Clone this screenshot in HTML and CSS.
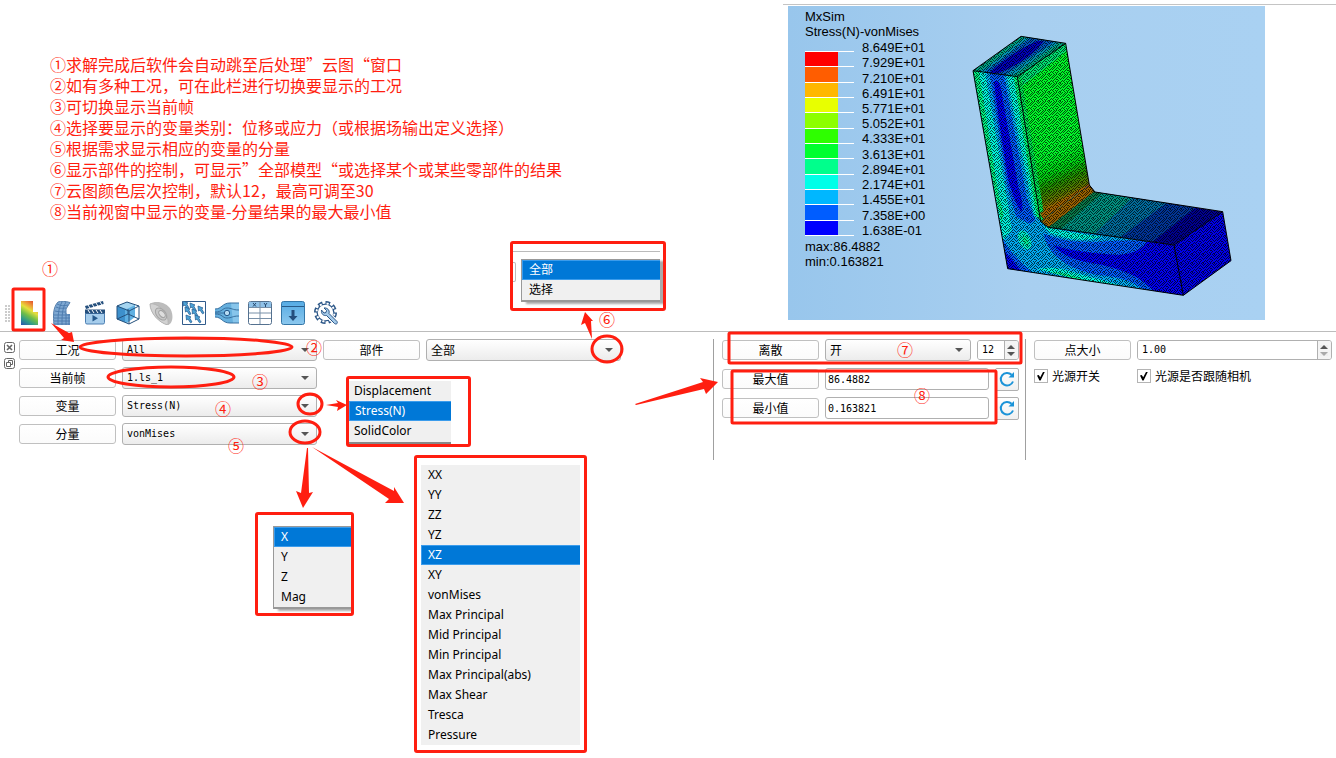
FILE: index.html
```html
<!DOCTYPE html>
<html lang="zh-CN">
<head>
<meta charset="utf-8">
<title>MxSim 云图</title>
<link rel="stylesheet" href="styles.css">
</head>
<body>
<main class="page">
  <section class="top">
    <div class="intro">
      <div class="notes">
        <p>①求解完成后软件会自动跳至后处理”云图“窗口</p>
        <p>②如有多种工况，可在此栏进行切换要显示的工况</p>
        <p>③可切换显示当前帧</p>
        <p>④选择要显示的变量类别：位移或应力（或根据场输出定义选择）</p>
        <p>⑤根据需求显示相应的变量的分量</p>
        <p>⑥显示部件的控制，可显示”全部模型“或选择某个或某些零部件的结果</p>
        <p>⑦云图颜色层次控制，默认12，最高可调至30</p>
        <p>⑧当前视窗中显示的变量-分量结果的最大最小值</p>
      </div>
      <div class="toolbar">
        <span class="grip"></span>
        <button class="tool" type="button" aria-label="云图">
          <svg viewBox="0 0 24 24"><defs><linearGradient id="cloud" gradientUnits="userSpaceOnUse" x1="17" y1="0" x2="3" y2="23"><stop offset="0" stop-color="#e0452c"/><stop offset="0.2" stop-color="#ee9a38"/><stop offset="0.36" stop-color="#e6e03c"/><stop offset="0.58" stop-color="#6fbe48"/><stop offset="0.78" stop-color="#2f9a8a"/><stop offset="1" stop-color="#2b56b0"/></linearGradient></defs><path d="M4 0h12v11h5v13H4z" fill="url(#cloud)"/></svg>
        </button>
        <button class="tool" type="button" aria-label="网格">
          <svg viewBox="0 0 24 24"><path d="M8 1C11 0 15 0 20 1.500L16 8v5h4v11H4C3 15 3 6 8 1z" fill="#7ea8d2"/><path d="M7 3c4 2 7 2 11 1M6 6c4 2 7 1 10 1M5 10c4 1 8 1 11 1M4 14h16M4 17h16M4 20h16M4 23h16M12 1C8 8 8 15 8 24M16 1c-4 7-4 14-4 23M16 12v12M19 13v11" fill="none" stroke="#4a78ab" stroke-width=".9"/><path d="M8 1C3 6 3 15 4 24M8 1C11 0 15 0 20 1.500L16 8v5" fill="none" stroke="#5680ad"/></svg>
        </button>
        <button class="tool" type="button" aria-label="动画">
          <svg viewBox="0 0 24 24"><path d="M2.500 12.500h19v9q0 1.500-1.500 1.500H4q-1.500 0-1.500-1.500z" fill="#a6cdec" stroke="#4c7fb2"/><path d="M2 8.500h20v4H2z" fill="#244f7d"/><path d="M5 9l2 3M9 9l2 3M13 9l2 3M17 9l2 3" stroke="#fff"/><path d="M2 5L20 0l.7 3L3 8z" fill="#244f7d"/><path d="M5 4l2 3M9 3l2 3M13 2l2 3M17 1l2 3" stroke="#fff"/><path d="M9.500 14v6.500l5.500-3.200z" fill="#24588c"/></svg>
        </button>
        <button class="tool" type="button" aria-label="实体">
          <svg viewBox="0 0 24 24"><path d="M1 5l10-4 8 3v12l-8 6L1 18z" fill="#5fb0e2"/><path d="M1 5l8 4v12l-8-3z" fill="#3d90cc"/><path d="M1 5l10-4 8 3-8 4z" fill="#a5d5f0"/><path d="M1 5l10-4 12 4-10 5zM1 5v13l12 5 10-5V5M13 10v13M1 18l11-5 11 5M12 8v5" fill="none" stroke="#24507c"/></svg>
        </button>
        <button class="tool" type="button" aria-label="剖切">
          <svg viewBox="0 0 24 24"><path d="M1 3C6-1 18 1 22 9c3 7 1 14-3 15C10 22 1 12 1 3z" fill="#bcbcbc"/><path d="M1 3c6-2 20 8 18 21C10 22 1 12 1 3z" fill="#d2d2d2" stroke="#b4b4b4"/><ellipse cx="12" cy="13" rx="7" ry="4.500" transform="rotate(50 12 13)" fill="#c8c8c8" stroke="#a4a4a4"/><ellipse cx="13" cy="13" rx="4" ry="2.500" transform="rotate(50 13 13)" fill="#dedede" stroke="#a4a4a4"/></svg>
        </button>
        <button class="tool" type="button" aria-label="矢量">
          <svg viewBox="0 0 24 24"><path d="M.5.500h23v23H.5z" fill="#fff" stroke="#315b8b"/><g fill="#4ba4d8" stroke="#2b6296" stroke-width=".8"><path id="vec" d="M1 0l5 2-1.400.8L7 7l-1.500.8L3 4 1.500 5z"/><use href="#vec" x="7" y="2"/><use href="#vec" x="15" y="5"/><use href="#vec" x="2" y="6"/><use href="#vec" x="9" y="8"/><use href="#vec" x="3" y="14"/><use href="#vec" x="12" y="14"/></g></svg>
        </button>
        <button class="tool" type="button" aria-label="流线">
          <svg viewBox="0 0 24 24"><path d="M0 8c7 0 7-6 15-6h9v20h-9C7 22 7 16 0 16z" fill="#66b0de"/><path d="M16 2h8v20h-6z" fill="#87c5eb"/><path d="M0 8c7 0 7-6 15-6h9M0 16c7 0 7 6 15 6h9M0 12h9M0 11c8 0 7-4 12-4s5 2 12 2M0 13c8 0 7 4 12 4s5-2 12-2" fill="none" stroke="#376f9f"/><circle cx="12" cy="12" r="2.700" fill="#b7dcf3" stroke="#24588c"/></svg>
        </button>
        <button class="tool" type="button" aria-label="表格">
          <svg viewBox="0 0 24 24"><rect x=".5" y=".5" width="23" height="23" rx="2" fill="#fff" stroke="#54718f"/><path d="M1 1h22v5H1z" fill="#8fc1e8"/><path d="M1 6.500h22M1 12h22M1 17.500h22M12 1v22" stroke="#7890a8" fill="none"/><path d="M5 2l3 3.500M8 2L5 5.500M16 2l1.500 2L19 2M17.500 4v2" stroke="#27496e" fill="none"/></svg>
        </button>
        <button class="tool" type="button" aria-label="导出">
          <svg viewBox="0 0 24 24"><defs><linearGradient id="save" x2="0" y2="1"><stop offset="0" stop-color="#55abe4"/><stop offset="1" stop-color="#8cc8ee"/></linearGradient></defs><rect x=".5" y=".5" width="23" height="23" rx="2" fill="url(#save)" stroke="#3477a8"/><path d="M1 5.500h22" stroke="#285b89"/><path d="M10.500 9h3v6h3l-4.500 5-4.500-5h3z" fill="#244f7d"/></svg>
        </button>
        <button class="tool" type="button" aria-label="设置">
          <svg viewBox="0 0 24 24"><circle cx="11.500" cy="11.500" r="9.500" fill="none" stroke="#2b5687" stroke-width="4" pathLength="80" stroke-dasharray="6 4"/><circle cx="11.500" cy="11.500" r="9" fill="#2b5687"/><circle cx="11.500" cy="11.500" r="9" fill="none" stroke="#fff" stroke-width="2" pathLength="80" stroke-dasharray="3 7" stroke-dashoffset="-1.500"/><circle cx="11.500" cy="11.500" r="7.700" fill="#fff"/><path d="M7.500 9c-.5 4 2 6 5 5.500l8 8c2 1.500 3.500-.5 2.500-2L15 12.500C16 9 13 6.500 10 7l2.500 2.500-.5 2-2 .5z" fill="#a5cbea" stroke="#fff" stroke-width="3"/><path d="M7.500 9c-.5 4 2 6 5 5.500l8 8c2 1.500 3.500-.5 2.500-2L15 12.500C16 9 13 6.500 10 7l2.500 2.500-.5 2-2 .5z" fill="#a5cbea" stroke="#2b5687"/></svg>
        </button>
      </div>
    </div>
    <div class="stage">
      <div class="viewer">
        <div class="legend">
          <p>MxSim</p>
          <p>Stress(N)-vonMises</p>
          <div class="scale">
            <div class="swatches">
              <span class="sw c1"></span><span class="sw c2"></span><span class="sw c3"></span><span class="sw c4"></span><span class="sw c5"></span><span class="sw c6"></span><span class="sw c7"></span><span class="sw c8"></span><span class="sw c9"></span><span class="sw c10"></span><span class="sw c11"></span><span class="sw c12"></span>
            </div>
            <div class="values">
              <span>8.649E+01</span><span>7.929E+01</span><span>7.210E+01</span><span>6.491E+01</span><span>5.771E+01</span><span>5.052E+01</span><span>4.333E+01</span><span>3.613E+01</span><span>2.894E+01</span><span>2.174E+01</span><span>1.455E+01</span><span>7.358E+00</span><span>1.638E-01</span>
            </div>
          </div>
          <p>max:86.4882</p>
          <p>min:0.163821</p>
        </div>
        <svg class="model" viewBox="0 0 900 870">
          <defs>
            <pattern id="mesh" width="33" height="27" patternUnits="userSpaceOnUse">
              <path d="M0 0h3v3H0zM6 0h3v3H6zM15 0h3v3h-3zM21 0h3v3h-3zM27 0h3v3h-3zM3 3h3v3H3zM12 3h3v3h-3zM18 3h3v3h-3zM30 3h3v3h-3zM0 6h3v3H0zM9 6h3v3H9zM15 6h3v3h-3zM24 6h3v3h-3zM6 9h3v3H6zM12 9h3v3h-3zM21 9h3v3h-3zM27 9h3v3h-3zM3 12h3v3H3zM9 12h3v3H9zM18 12h3v3h-3zM30 12h3v3h-3zM0 15h3v3H0zM15 15h3v3h-3zM21 15h3v3h-3zM24 15h3v3h-3zM6 18h3v3H6zM12 18h3v3h-3zM27 18h3v3h-3zM3 21h3v3H3zM9 21h3v3H9zM18 21h3v3h-3zM24 21h3v3h-3zM0 24h3v3H0zM12 24h3v3h-3zM21 24h3v3h-3zM30 24h3v3h-3z"/>
            </pattern>
            <clipPath id="front"><path d="M69 152L202 170 272 605 295 622 672 675 700 826 173 746z"/></clipPath>
            <clipPath id="cap"><path d="M69 152L213 49 347 70 202 170z"/></clipPath>
            <clipPath id="back"><path d="M202 170L347 70 418 495 435 516 295 622 272 605z"/></clipPath>
            <clipPath id="seat"><path d="M272 605L418 495 435 516 818 575 672 675 295 622z"/></clipPath>
            <linearGradient id="heat" gradientUnits="userSpaceOnUse" x1="296" y1="405" x2="362" y2="550">
              <stop offset="0" stop-color="#00f828"/><stop offset=".35" stop-color="#00d010"/><stop offset=".55" stop-color="#209000"/><stop offset=".78" stop-color="#5c7400"/><stop offset=".92" stop-color="#a06800"/><stop offset="1" stop-color="#b84000"/>
            </linearGradient>
          </defs>
          <g clip-path="url(#cap)">
            <path d="M60 40h300v140H60z" fill="#00a080"/>
            <path d="M85 158L230 50 330 65 182 170z" fill="#0090b0"/>
            <path d="M100 158L245 50 312 66 160 168z" fill="#0055b8"/>
            <path d="M118 158Q180 100 262 62L282 64Q240 120 145 160z" fill="#0000b8"/>
          </g>
          <g clip-path="url(#back)">
            <path d="M190 60h260v570H190z" fill="url(#heat)"/>
            <path d="M202 170L347 70 350 92 208 205z" fill="#00e070"/>
            <path d="M202 170L215 175 285 600 270 605z" fill="#00e050"/>
            <path d="M270 580L420 490 436 520 296 624z" fill="#a06000"/>
            <path d="M310 580L395 528 405 535 320 585z" fill="#d82800"/>
          </g>
          <g clip-path="url(#seat)">
            <path d="M260 490h570v200H260z" fill="#000090"/>
            <path d="M270 480L740 560 590 680 270 640z" fill="#003498"/>
            <path d="M270 480L650 548 500 660 270 640z" fill="#006a9c"/>
            <path d="M270 480L545 535 425 650 270 640z" fill="#009080"/>
            <path d="M270 480L455 520 330 630 270 640z" fill="#087848"/>
            <path d="M270 600L420 495 432 515 295 622z" fill="#986000"/>
          </g>
          <g clip-path="url(#front)">
            <path d="M60 140h650v700H60z" fill="#00a8f0"/>
            <path d="M60 150H104L175 560 185 630 160 660z" fill="#00f0d8"/>
            <path d="M60 150H86L145 520 160 580 155 610z" fill="#00f080"/>
            <path d="M170 165L205 170 278 605 252 585z" fill="#00f0d8"/>
            <path d="M190 165L205 170 278 605 260 590z" fill="#00f070"/>
            <path d="M118 155H160L232 540 256 600 240 612 198 590 172 500z" fill="#0058f8"/>
            <path d="M132 185Q142 175 152 200L205 500Q224 560 214 575 198 560 175 480 145 300 132 185z" fill="#0000f0"/>
            <path d="M280 618Q360 640 460 650 380 672 300 640z" fill="#00f0d8"/>
            <path d="M280 640Q350 675 480 662L600 660 720 690V840H610Q560 770 440 765 300 735 280 640z" fill="#0058f8"/>
            <path d="M310 675Q360 695 500 705 570 700 590 665L700 670V840L612 815Q560 750 420 728 340 715 310 675z" fill="#0000f0"/>
            <path d="M262 748Q310 735 380 760L510 795 490 805z" fill="#00f0d8"/>
            <path d="M300 757Q350 755 410 784z" fill="#00f080"/>
            <ellipse cx="224" cy="660" rx="18" ry="30" transform="rotate(-25 224 660)" fill="#00e8c8"/>
            <ellipse cx="227" cy="662" rx="7" ry="14" transform="rotate(-25 227 662)" fill="#00e890"/>
            <path d="M155 650Q180 700 250 760L160 750z" fill="#0058f8"/>
            <path d="M160 690Q190 720 215 755L160 750z" fill="#0000f0"/>
          </g>
          <path d="M672 675L818 575 843 722 700 826z" fill="#0000e8"/>
          <path d="M69 152L213 49 347 70 418 495 435 516 818 575 843 722 700 826 173 746z" fill="url(#mesh)" opacity=".68" shape-rendering="crispEdges"/>
          <path d="M69 152L213 49 347 70 418 495 435 516 818 575 843 722 700 826 173 746zM69 152L202 170 347 70M202 170L272 605 295 622 672 675 818 575M672 675L700 826" fill="none" stroke="#000" stroke-width="3"/>
        </svg>
      </div>
    </div>
  </section>

  <section class="panel">
    <div class="group group-a">
      <div class="dock">
        <button type="button" class="dock-btn" aria-label="关闭"><svg viewBox="0 0 11 11"><rect x=".5" y=".5" width="10" height="10" rx="2"/><path d="M3 3l5 5M8 3L3 8" stroke-width="1.600"/></svg></button>
        <button type="button" class="dock-btn" aria-label="浮动"><svg viewBox="0 0 11 11"><rect x=".5" y=".5" width="10" height="10" rx="2"/><path d="M4.500 4V2.500h4v4H7M2.500 4.500h4v4h-4z"/></svg></button>
      </div>
      <div class="fields">
        <label class="cap" for="case">工况</label>
        <div class="combo"><select id="case"><option>All</option></select></div>
        <label class="cap" for="part">部件</label>
        <div class="combo"><select id="part" class="cn"><option>全部</option><option>选择</option></select></div>
        <label class="cap start" for="frame">当前帧</label>
        <div class="combo"><select id="frame"><option>1.ls_1</option></select></div>
        <label class="cap start" for="variable">变量</label>
        <div class="combo"><select id="variable"><option>Stress(N)</option></select></div>
        <label class="cap start" for="component">分量</label>
        <div class="combo"><select id="component"><option>vonMises</option></select></div>
      </div>
    </div>
    <div class="group group-b">
      <div class="row">
        <label class="cap" for="discrete">离散</label>
        <div class="combo grow"><select id="discrete" class="cn"><option>开</option></select></div>
        <div class="spin small"><input id="levels" type="text" value="12" aria-label="层次"><span class="steps"><button type="button" class="up" aria-label="增加"></button><button type="button" class="down" aria-label="减少"></button></span></div>
      </div>
      <div class="row">
        <label class="cap" for="max">最大值</label>
        <input class="text grow" id="max" type="text" value="86.4882">
        <button type="button" class="refresh" aria-label="刷新最大值"><svg viewBox="0 0 18 18"><path d="M15 11.500A6.300 6.300 0 1 1 13.600 4.800" /><path class="tip" d="M16 2v5.500h-5.500z"/></svg></button>
      </div>
      <div class="row">
        <label class="cap" for="min">最小值</label>
        <input class="text grow" id="min" type="text" value="0.163821">
        <button type="button" class="refresh" aria-label="刷新最小值"><svg viewBox="0 0 18 18"><path d="M15 11.500A6.300 6.300 0 1 1 13.600 4.800" /><path class="tip" d="M16 2v5.500h-5.500z"/></svg></button>
      </div>
    </div>
    <div class="group group-c">
      <div class="row">
        <label class="cap" for="point">点大小</label>
        <div class="spin grow"><input id="point" type="text" value="1.00"><span class="steps"><button type="button" class="up" aria-label="增大"></button><button type="button" class="down off" aria-label="减小"></button></span></div>
      </div>
      <div class="row checks">
        <label class="check"><input type="checkbox" checked>光源开关</label>
        <label class="check"><input type="checkbox" checked>光源是否跟随相机</label>
      </div>
    </div>
  </section>

  <div class="callout call-part">
    <ul class="menu framed"><li class="on">全部</li><li>选择</li></ul>
  </div>
  <div class="callout call-variable">
    <ul class="menu"><li>Displacement</li><li class="on">Stress(N)</li><li>SolidColor</li></ul>
  </div>
  <div class="callout call-axis">
    <ul class="menu framed"><li class="on">X</li><li>Y</li><li>Z</li><li>Mag</li></ul>
  </div>
  <div class="callout call-component">
    <ul class="menu"><li>XX</li><li>YY</li><li>ZZ</li><li>YZ</li><li class="on">XZ</li><li>XY</li><li>vonMises</li><li>Max Principal</li><li>Mid Principal</li><li>Min Principal</li><li>Max Principal(abs)</li><li>Max Shear</li><li>Tresca</li><li>Pressure</li></ul>
  </div>

  <svg class="marks" viewBox="0 0 1336 758" width="1336" height="758">
    <g class="outline">
      <rect x="13" y="289" width="31" height="41" rx="1"/>
      <rect x="729" y="333" width="292" height="30" rx="1"/>
      <rect x="732" y="371" width="264" height="52" rx="1"/>
      <ellipse cx="186" cy="347" rx="106" ry="9"/>
      <ellipse cx="171" cy="377" rx="63" ry="10"/>
      <ellipse cx="310" cy="404" rx="12" ry="10"/>
      <ellipse cx="305" cy="432" rx="15" ry="11"/>
      <ellipse cx="607" cy="349" rx="15" ry="13"/>
    </g>
    <g class="arrow">
      <path d="M51 323L69 333 72 332 74 342 61 340 64 338z"/>
      <path d="M326 405L338 403 336 400 347 405 337 411 338 407z"/>
      <path d="M592 339L591 321 593 321 585 312 581 325 585 323z"/>
      <path d="M635 404L703 382 700 378 718 382 706 394 704 389 636 405z"/>
      <path d="M308 448L309 493 313 492 303 508 296 491 301 493 307 448z"/>
      <path d="M312 447L394 491 394 487 404 503 385 503 389 499z"/>
    </g>
    <g class="digits">
      <text x="50" y="275">①</text>
      <text x="314" y="354">②</text>
      <text x="260" y="388">③</text>
      <text x="223" y="415">④</text>
      <text x="236" y="452">⑤</text>
      <text x="607" y="326">⑥</text>
      <text x="905" y="356">⑦</text>
      <text x="922" y="402">⑧</text>
    </g>
  </svg>
</main>
</body>
</html>
```
FILE: styles.css
```css
* { box-sizing: border-box; }
body {
  margin: 0;
  background: #fff;
  color: #000;
  font: 12px/20px "Noto Sans", "Noto Sans CJK SC", sans-serif;
}
p, ul { margin: 0; padding: 0; list-style: none; }
button, input, select { font: inherit; color: inherit; margin: 0; padding: 0; }

.page { position: relative; min-height: 100vh; overflow: hidden; }

/* notes, toolbar and result view */
.top { display: grid; grid-template-columns: 783fr 553fr; }
.intro {
  display: flex;
  flex-direction: column;
  justify-content: space-between;
  padding: 54px 0 6px;
}
.notes {
  padding-left: 50px;
  color: #ff1e10;
  font: 16px/21px "Noto Sans CJK SC", sans-serif;
}
.toolbar { display: flex; align-items: center; gap: 9px; padding-left: 5px; }
.grip {
  width: 5px;
  height: 17px;
  margin-right: -2px;
  background: radial-gradient(circle at 1px 1px, #ccc 1px, transparent 1px) 0 0 / 3px 3px;
}
.tool { width: 24px; height: 24px; border: 0; background: none; }
.tool svg { display: block; width: 24px; height: 24px; }

.stage { margin-top: 4px; padding: 1px 71px 11px 5px; border-top: 1px solid #c4c4c4; }
.viewer {
  display: flex;
  align-items: flex-start;
  height: 314px;
  background: linear-gradient(90deg, #98c6ec, #a8cff0 50%, #a9d1f2);
}
.legend {
  width: 162px;
  padding: 3px 0 0 17px;
  font: 13px/15px "Liberation Sans", Arial, sans-serif;
  white-space: nowrap;
}
.scale { display: flex; gap: 8px; padding: 1px 0; }
.swatches { display: grid; width: 49px; height: 185px; margin-top: 11px; border-bottom: 1px solid #fff; }
.sw { border-top: 1px solid #fff; background: linear-gradient(currentColor, currentColor) 0 0 / 33px 100% no-repeat; }
.c1 { color: #f00; }
.c2 { color: #ff5d00; }
.c3 { color: #ffb700; }
.c4 { color: #e8ff00; }
.c5 { color: #8cff00; }
.c6 { color: #2eff00; }
.c7 { color: #00ff2e; }
.c8 { color: #00ff8c; }
.c9 { color: #00ffe8; }
.c10 { color: #00b7ff; }
.c11 { color: #005dff; }
.c12 { color: #00f; }
.values { display: grid; height: 198px; align-items: center; }
.model { width: 300px; height: 290px; margin-top: 14px; }

/* property panel */
.panel {
  display: grid;
  grid-template-columns: 713fr 312fr 311fr;
  padding-top: 7px;
  border-top: 1px solid #bcbcbc;
  font-family: "Noto Sans CJK SC", sans-serif;
}
.group { min-height: 121px; }
.group-a { display: flex; }
.group-b, .group-c { border-left: 1px solid #a0a0a0; }
.group-b { padding: 0 6px 0 8px; }
.group-c { padding: 0 4px 0 8px; }

.dock { display: flex; flex-direction: column; gap: 5px; width: 19px; padding: 3px 4px; }
.dock-btn { width: 11px; height: 11px; border: 0; background: none; }
.dock-btn svg { display: block; width: 11px; height: 11px; fill: none; stroke: #666; }

.fields {
  display: grid;
  grid-template-columns: 97px 195px 97px 195px;
  gap: 6px;
  align-content: start;
  align-items: center;
}
.start { grid-column: 1; }
.row { display: flex; align-items: center; gap: 6px; height: 22px; margin-bottom: 7px; }
.grow { flex: 1; min-width: 0; }

.cap {
  flex: none;
  width: 97px;
  height: 20px;
  border: 1px solid #c0c0c0;
  border-radius: 3px;
  background: linear-gradient(#fff, #fbfbfb);
  text-align: center;
  line-height: 18px;
}
.combo { position: relative; height: 22px; }
.combo select {
  display: block;
  width: 100%;
  height: 22px;
  padding: 0 20px 0 4px;
  appearance: none;
  border: 1px solid #b0b0b0;
  border-radius: 3px;
  background: linear-gradient(#fff, #ececec);
  font: 10px/20px "DejaVu Sans Mono", monospace;
}
.combo select.cn { font: 12px/20px "Noto Sans CJK SC", sans-serif; }
.combo::after {
  content: "";
  position: absolute;
  right: 8px;
  top: 9px;
  border: 4px solid transparent;
  border-top-color: #555;
  border-bottom: 0;
}
.text {
  height: 22px;
  padding: 0 2px;
  border: 1px solid #b0b0b0;
  border-radius: 3px;
  background: #fff;
  font: 10px/20px "DejaVu Sans Mono", monospace;
}
.spin {
  display: flex;
  height: 20px;
  border: 1px solid #b0b0b0;
  border-radius: 3px;
  overflow: hidden;
}
.spin input {
  flex: 1;
  min-width: 0;
  padding-left: 4px;
  border: 0;
  font: 10px/18px "DejaVu Sans Mono", monospace;
}
.small { width: 42px; }
.steps {
  display: flex;
  flex-direction: column;
  justify-content: center;
  gap: 3px;
  width: 14px;
  padding-left: 2px;
  border-left: 1px solid #b0b0b0;
  background: #f4f4f4;
}
.steps button { width: 0; height: 0; border: 4px solid transparent; }
.steps .up { border-top: 0; border-bottom: 4px solid #555; }
.steps .down { border-bottom: 0; border-top: 4px solid #555; }
.steps .off { border-top-color: #aaa; }

.refresh {
  display: grid;
  place-items: center;
  width: 24px;
  height: 23px;
  border: 1px solid #b0b0b0;
  border-radius: 2px;
  background: linear-gradient(#fff, #f0f0f0);
}
.refresh svg { width: 18px; height: 18px; fill: none; stroke: #1b93d8; stroke-width: 2; }
.refresh .tip { fill: #1b93d8; stroke: none; }

.checks { align-items: flex-start; }
.check { display: flex; align-items: center; gap: 4px; height: 16px; white-space: nowrap; }
.check:first-child { width: 97px; }
.check input {
  display: grid;
  place-items: center;
  width: 14px;
  height: 14px;
  appearance: none;
  border: 1px solid #b4b4b4;
  background: #fff;
}
.check input:checked::after {
  content: "";
  width: 8px;
  height: 9px;
  background: #000;
  clip-path: polygon(0 45%, 22% 38%, 40% 65%, 78% 0, 100% 0, 45% 100%, 30% 100%);
}

/* opened drop-down lists in red frames */
.callout { position: absolute; border: 3px solid #ff1e10; border-radius: 3px; overflow: hidden; }
.menu { background: #f0f0f0; }
.menu li { height: 20px; padding-left: 7px; line-height: 20px; white-space: nowrap; }
.menu .on { background: #0078d7; color: #fff; border: 1px solid #3b9cec; border-right: 0; padding-left: 6px; line-height: 18px; }
.framed { border: 1px solid #999; border-right: 0; border-bottom-width: 2px; box-shadow: 5px 2px 2px #aaa; }
.call-part { left: 510px; top: 241px; width: 156px; height: 70px; padding: 15px 3px 0 8px; }
.call-part::before { content: ""; position: absolute; left: 0; right: 3px; top: 7px; border-top: 1px solid #bbb; }
.call-part::after { content: ""; position: absolute; left: -2px; top: 18px; width: 4px; height: 18px; border: 1px solid #bbb; border-left: 0; border-radius: 2px; }
.call-variable { left: 346px; top: 376px; width: 125px; height: 71px; padding: 2px 17px 0 0; }
.call-variable .menu { padding-bottom: 1px; border-bottom: 2px solid #888; }
.call-variable .menu li { padding-left: 5px; }
.call-axis { left: 255px; top: 512px; width: 99px; height: 104px; padding: 11px 0 0 15px; }
.call-component { left: 414px; top: 455px; width: 173px; height: 298px; padding: 7px 4px 0 4px; }

/* hand-drawn marks */
.marks { position: absolute; left: 0; top: 0; pointer-events: none; }
.outline { fill: none; stroke: #ff1e10; stroke-width: 3; }
.arrow { fill: #ff1e10; }
.digits { fill: #ff1e10; font: 16px "Noto Sans CJK SC", sans-serif; text-anchor: middle; }
```
